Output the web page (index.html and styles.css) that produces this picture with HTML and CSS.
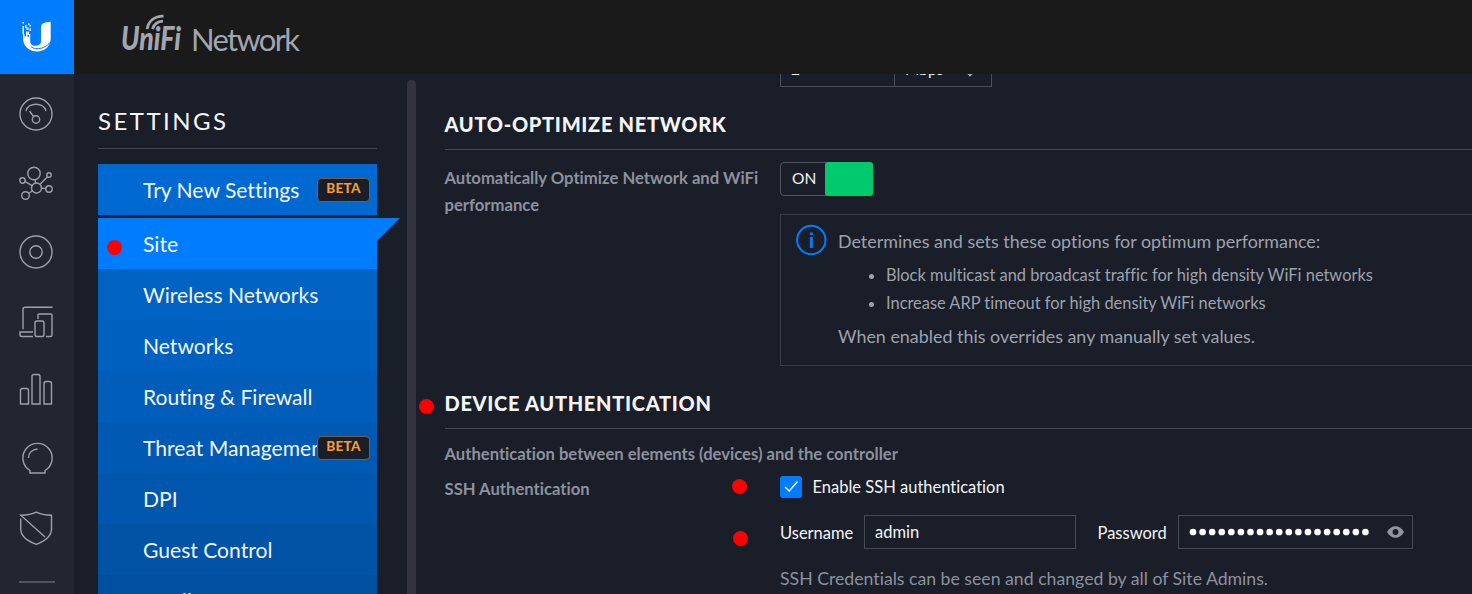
FILE: index.html
```html
<!DOCTYPE html>
<html lang="en">
<head>
<meta charset="utf-8">
<title>UniFi Network</title>
<link rel="stylesheet" href="styles.css">
</head>
<body>
<header class="topbar">
  <div class="brand">
    <svg width="74" height="74" viewBox="0 0 74 74" fill="#fff">
      <path d="M41 27c0-3 3-5 9.700-5.200V38c0 8-5.500 13.500-13.700 13.500S23 46 23 38v-4h1.500v2.500H26v-5h1.500V37H29v-3h1.200v7.500c0 2.700 2.300 4.300 5.300 4.300s5.500-1.800 5.500-4.300z"/>
      <path d="M31 46.800c5.500 4 15 1.500 20-5.300" fill="none" stroke="#007dff"/>
      <path d="M22.500 22H24v1.500h-1.500zM22.500 26H24v8h-1.500zM25 25h1.500v3H25zM28 23.500h1.500V25H28zM29.500 25H31v1.500h-1.500zM26.500 27.500h2V30h-2zM29.500 28.500H31V31h-1.500zM27.500 31.500H29V35h-1.500z"/>
    </svg>
  </div>
  <svg class="wordmark" width="190" height="50" viewBox="0 0 190 50">
    <text class="unifi" x="0" y="41" textLength="60" lengthAdjust="spacingAndGlyphs">UniFi</text>
    <path d="M26 20C28 11 33 7.500 42.500 7.200M31.500 20c1.500-5 4.500-7.500 10.500-7.800" fill="none" stroke="#a2a6b1" stroke-width="2.800"/>
    <text class="network" x="70" y="41.500" textLength="109" lengthAdjust="spacing">Network</text>
  </svg>
</header>
<div class="body">
  <nav class="rail">
    <svg viewBox="0 0 34 34"><circle cx="17" cy="17" r="16"/><path d="M7 14c2-9 18-9 20 0M10.500 14l4.500 6"/><circle cx="17" cy="22.500" r="3.700"/></svg>
    <svg viewBox="0 0 34 34"><circle cx="15" cy="7.500" r="6.200"/><circle cx="17.500" cy="22" r="5"/><circle cx="30" cy="9" r="2.200"/><circle cx="3.500" cy="14.500" r="2.700"/><circle cx="6.500" cy="29.500" r="3.800"/><circle cx="30" cy="23" r="3.200"/><path d="M16 13.500l.6 3.500M6 15.700l7.200 4M21 18.300l7.500-7.500M9.800 27.300l3.700-2.600M22.500 22.400h4.200"/></svg>
    <svg viewBox="0 0 34 34"><circle cx="17" cy="17" r="16"/><circle cx="17" cy="17" r="6.200"/></svg>
    <svg viewBox="0 0 34 34"><path d="M33.500 3.200H6Q4 3.200 4 5.200v20M14 28H1v3q0 1.500 2 1.500h11M19 15v-4q0-1 1-1h12q1 0 1 1v20q0 1.500-1.500 1.500H27"/><rect x="16" y="17" width="9" height="15.500" rx="2"/></svg>
    <svg viewBox="0 0 34 34"><path d="M1.500 31V17.500q0-2 2-2h4q2 0 2 2V31zM13 31V3.500q0-2 2-2h4q2 0 2 2V31zM25 31V10.500q0-2 2-2h3.500q2 0 2 2V31z"/></svg>
    <svg viewBox="0 0 34 34"><path d="M11 31v-2.500A14.600 14.600 0 1 1 26 28.500V31zM9.500 16c0-5 3.500-8.500 9-9"/></svg>
    <svg viewBox="0 0 34 34"><path d="M1.700 7.500V18c0 7.500 8 12.500 15.500 15.300C24.700 30.500 32.500 25.500 32.500 18V4.200c-6 0-11-.8-15.300-3C13 3.400 8 4.200 1.700 4.200L26 26"/></svg>
    <i class="rail-line"></i>
  </nav>
  <aside class="settings">
    <h1>SETTINGS</h1>
    <ul class="menu">
      <li class="try">Try New Settings<b class="beta">BETA</b></li>
      <li class="site"><i class="dot"></i>Site</li>
      <li class="m1">Wireless Networks</li>
      <li class="m2">Networks</li>
      <li class="m3">Routing &amp; Firewall</li>
      <li class="m4">Threat Management<b class="beta">BETA</b></li>
      <li class="m5">DPI</li>
      <li class="m6">Guest Control</li>
      <li class="m7">Profiles</li>
    </ul>
  </aside>
  <div class="scroll"></div>
  <main class="content">
    <div class="clip"><div class="rate"><span class="num">2</span><span class="unit">Mbps</span><svg width="10" height="14" viewBox="0 0 10 14"><path d="M1.500 5L5 1.500 8.500 5M1.500 9L5 12.500 8.500 9" fill="none" stroke="#a2a6b1" stroke-width="1.600"/></svg></div></div>
    <h2 class="h-auto">AUTO-OPTIMIZE NETWORK</h2>
    <section class="optimize">
      <div class="label">Automatically Optimize Network and WiFi<br>performance</div>
      <div class="field">
        <div class="toggle"><span>ON</span><i></i></div>
        <div class="info">
          <svg width="32" height="32" viewBox="0 0 32 32"><circle cx="16.300" cy="16" r="14.200" fill="none" stroke="#007dff" stroke-width="2"/><path d="M14.800 8.500h3v2.500h-3zM14.800 13h3v11h-3z" fill="#007dff"/></svg>
          <div class="info-text">
            <p class="i1">Determines and sets these options for optimum performance:</p>
            <ul><li>Block multicast and broadcast traffic for high density WiFi networks</li><li>Increase ARP timeout for high density WiFi networks</li></ul>
            <p class="i4">When enabled this overrides any manually set values.</p>
          </div>
        </div>
      </div>
    </section>
    <h2 class="h-device"><i class="dot"></i>DEVICE AUTHENTICATION</h2>
    <p class="desc">Authentication between elements (devices) and the controller</p>
    <section class="ssh">
      <div class="label ssh-label">SSH Authentication</div>
      <div class="field">
        <div class="check"><i class="dot"></i><span class="box"><svg width="22" height="22" viewBox="0 0 22 22"><path d="M5 11l4.200 4L17.500 5.500" fill="none" stroke="#fff" stroke-width="1.300"/></svg></span><span class="enable">Enable SSH authentication</span></div>
        <div class="creds"><i class="dot"></i><span class="user">Username</span><span class="input">admin</span><span class="pass">Password</span><span class="input secret"><svg class="bullets" width="182" height="10" viewBox="0 0 182 10"><path d="M4 5h176" fill="none" stroke="#fff" stroke-width="6.700" stroke-linecap="round" stroke-dasharray="0 9.580"/></svg><svg width="17" height="12" viewBox="0 0 17 12"><path d="M0 6C4-1.700 13-1.700 17 6 13 13.700 4 13.700 0 6z" fill="#9296a2"/><circle cx="8.500" cy="6" r="2.900" fill="#191e29"/></svg></span></div>
        <p class="note">SSH Credentials can be seen and changed by all of Site Admins.</p>
      </div>
    </section>
  </main>
</div>
</body>
</html>
```

FILE: styles.css
```css
*{box-sizing:border-box}
body{margin:0;height:594px;overflow:hidden;background:#191e29;color:#f4f5f7;font-family:Lato,sans-serif;font-size:16.500px;font-variant-ligatures:none}
h1,h2,p,ul{margin:0;padding:0;font-weight:400}
ul{list-style:none}
svg{display:block;flex:none}
.topbar{height:74px;display:flex;background:#1a1a1a}
.brand{width:74px;background:#007dff}
.wordmark{margin:9px 0 0 47px;fill:#a2a6b1}
.unifi{font-size:33px;font-weight:900;font-style:italic}
.network{font-size:31px}
.body{display:flex;height:520px;overflow:hidden}
.rail{width:74px;flex:none;background:#212631;display:flex;flex-direction:column;align-items:center;padding:23.500px 1px 0 0;gap:35px}
.rail svg{width:34px;height:34px;margin:-.5px 0 .5px -.5px;fill:none;stroke:#9da1ac;stroke-width:1.400}
.rail-line{width:36px;height:2px;background:#50545f;flex:none}
.settings{width:333px;flex:none;padding-left:24px}
h1{width:279px;height:75px;border-bottom:1px solid #41464f;font-size:24px;line-height:94px;letter-spacing:2.450px}
.menu{width:279px;padding-top:15px;font-size:21.100px}
.menu li{height:51px;line-height:51px;padding-left:45px;position:relative;white-space:nowrap}
.menu .try{background:#0069d1;margin-bottom:3px}
.menu .site{background:#007dff}
.site::after{content:"";position:absolute;left:279px;top:0;border-top:23px solid #007dff;border-right:23px solid transparent}
.m1{background:#0062c3}.m2{background:#0060bf}.m3{background:#005db9}.m4{background:#005ab3}.m5{background:#0057ad}.m6{background:#0053a5}.m7{background:#0050a0}
.beta{position:absolute;right:7px;top:14px;width:53px;height:24px;border:1px solid #805e3c;border-radius:4px;background:#191e29;color:#f79a32;font-size:13.500px;font-weight:900;line-height:19px;letter-spacing:.3px;text-align:center}
.dot{position:absolute;width:15px;height:15px;border-radius:50%;background:red}
.site .dot{left:8.500px;top:22px}
.scroll{width:9px;flex:none;margin-top:6px;background:#31343f;border-radius:5px 5px 0 0}
.content{flex:1;min-width:0;padding-left:28.500px}
.clip{height:13px;overflow:hidden;display:flex;align-items:flex-end;margin-left:335.500px}
.rate{height:34px;width:212px;border:1px solid #4a505a;display:flex;align-items:center;font-size:15.500px}
.rate span{height:32px;line-height:31px;padding-left:10px}
.num{width:114px;border-right:1px solid #4a505a}
.unit{width:70px}
h2{position:relative;font-size:20px;font-weight:900;letter-spacing:.7px;border-bottom:1px solid #444953;white-space:nowrap}
.h-auto{height:63px;line-height:74px}
.optimize,.ssh{display:flex}
.label{width:335.500px;flex:none;font-size:16.650px;font-weight:700;color:#8d919d;line-height:27px;white-space:nowrap}
.optimize .label{padding-top:15px}
.field{flex:1;min-width:0}
.toggle{display:flex;width:93px;height:34px;margin-top:12px;border:1px solid #50545f;border-radius:4px;font-size:15.500px;line-height:30px}
.toggle span{width:44px;padding-left:11px;flex:none}
.toggle i{flex:none;width:48px;height:34px;margin-top:-1px;background:#00ca6d;border-radius:3px}
.info{height:152px;margin-top:18px;border:1px solid #363b45;border-right:0;display:flex;padding:9px 0 0 14px;color:#9ea2ad;white-space:nowrap}
.info-text{padding-left:11px;font-size:17.900px}
.i1{line-height:34px}
.info ul{font-size:16.420px;line-height:28px;padding-left:48px;list-style:disc;padding-top:3px}
.i4{line-height:28px;padding-top:5px}
.h-device{height:63px;line-height:75px}
.h-device .dot{left:-26px;top:33px}
.desc{font-size:16.610px;font-weight:700;color:#8d919d;line-height:50px;height:47px}
.ssh-label{line-height:26px}
.check,.creds{position:relative;display:flex;align-items:center}
.check{height:22px}
.check .dot{left:-48px;top:3px}
.box{width:22px;height:22px;border-radius:3px;background:#007dff}
.enable{margin:0 0 0 10.500px}
.creds{height:34px;margin-top:17px}
.creds .dot{left:-47px;top:16px}
.user{width:84px;padding-top:1px}
.input{width:212px;height:34px;border:1px solid #434c55;line-height:32px;padding-left:10px}
.pass{margin-left:21.500px;width:80.500px;padding-top:1px}
.secret{width:235px;display:flex;align-items:center}
.bullets{margin-right:15.500px}
.note{color:#8d919d;font-size:17.680px;line-height:30px;padding-top:15px}
```
